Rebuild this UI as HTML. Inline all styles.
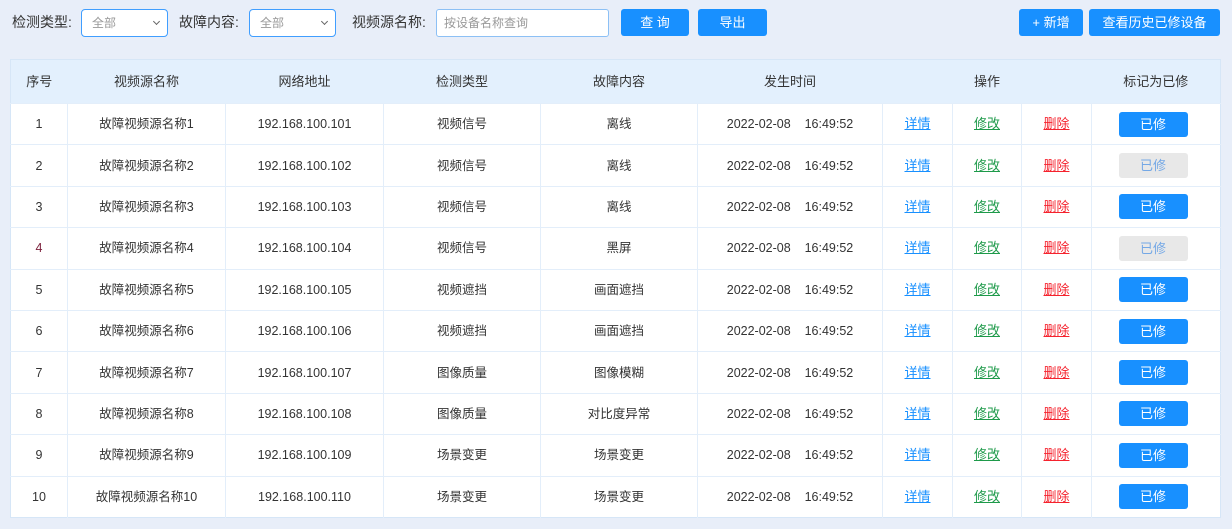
<!DOCTYPE html>
<html><head><meta charset="utf-8"><style>
*{box-sizing:border-box;margin:0;padding:0}
body{width:1232px;height:529px;background:#e8eef9;font-family:"Liberation Sans","Noto Sans CJK SC",sans-serif;color:#333;position:relative;overflow:hidden;line-height:16px}
.lbl{position:absolute;top:14px;font-size:14px;color:#333}
.sel{position:absolute;top:9px;height:28px;border:1px solid #409eff;border-radius:4px;background:#fff;font-size:12px;color:#999;padding:6px 10px;line-height:14px}
.sel:after{content:"";position:absolute;right:8px;top:9px;width:4px;height:4px;border-right:1px solid #666;border-bottom:1px solid #666;transform:rotate(45deg)}
.inp{position:absolute;top:9px;left:436px;width:173px;height:28px;border:1px solid #8cc0f5;border-radius:3px;background:#fff;font-size:12px;color:#999;padding:6px 7px;line-height:14px}
.btn{position:absolute;top:9px;height:27px;background:#1890ff;color:#fff;border-radius:3px;font-size:13px;text-align:center;line-height:27px}
table{position:absolute;left:10px;top:59px;width:1210px;border-collapse:collapse;table-layout:fixed;background:#fff;border:1px solid #d6e6f7}
th{height:44px;background:#e3f0fd;font-weight:normal;font-size:13px;color:#333;line-height:16px}
td{height:41.4px;text-align:center;font-size:12.5px;color:#333;border-left:1px solid #e3eefa;border-top:1px solid #e3eefa;line-height:16px}
td:first-child{border-left:none}
td:last-child{padding-right:6px}
a{font-size:13px;text-decoration:underline}
.x{color:#1890ff}.m{color:#1e9a4a}.d{color:#f5222d}
.y{display:inline-block;width:69px;height:25px;line-height:25px;border-radius:3px;background:#1890ff;color:#fff;font-size:13px;vertical-align:middle}
.g{background:#e8e8e8;color:#74a8e6}
</style></head><body>
<div class="lbl" style="left:12px">检测类型:</div>
<div class="sel" style="left:81px;width:87px">全部</div>
<div class="lbl" style="left:179px">故障内容:</div>
<div class="sel" style="left:249px;width:87px">全部</div>
<div class="lbl" style="left:352px">视频源名称:</div>
<div class="inp">按设备名称查询</div>
<div class="btn" style="left:621px;width:68px">查 询</div>
<div class="btn" style="left:698px;width:69px">导出</div>
<div class="btn" style="left:1019px;width:64px">+ 新增</div>
<div class="btn" style="left:1089px;width:131px">查看历史已修设备</div>
<table>
<colgroup><col style="width:57px"><col style="width:158px"><col style="width:158px"><col style="width:157px"><col style="width:157px"><col style="width:185px"><col style="width:70px"><col style="width:69px"><col style="width:70px"><col style="width:129px"></colgroup>
<tr><th>序号</th><th>视频源名称</th><th>网络地址</th><th>检测类型</th><th>故障内容</th><th>发生时间</th><th colspan="3">操作</th><th>标记为已修</th></tr>
<tr><td>1</td><td>故障视频源名称1</td><td>192.168.100.101</td><td>视频信号</td><td>离线</td><td>2022-02-08&nbsp;&nbsp;&nbsp;&nbsp;16:49:52</td><td><a class="x">详情</a></td><td><a class="m">修改</a></td><td><a class="d">删除</a></td><td><span class="y">已修</span></td></tr>
<tr><td>2</td><td>故障视频源名称2</td><td>192.168.100.102</td><td>视频信号</td><td>离线</td><td>2022-02-08&nbsp;&nbsp;&nbsp;&nbsp;16:49:52</td><td><a class="x">详情</a></td><td><a class="m">修改</a></td><td><a class="d">删除</a></td><td><span class="y g">已修</span></td></tr>
<tr><td>3</td><td>故障视频源名称3</td><td>192.168.100.103</td><td>视频信号</td><td>离线</td><td>2022-02-08&nbsp;&nbsp;&nbsp;&nbsp;16:49:52</td><td><a class="x">详情</a></td><td><a class="m">修改</a></td><td><a class="d">删除</a></td><td><span class="y">已修</span></td></tr>
<tr><td style="color:#7a1f3a">4</td><td>故障视频源名称4</td><td>192.168.100.104</td><td>视频信号</td><td>黑屏</td><td>2022-02-08&nbsp;&nbsp;&nbsp;&nbsp;16:49:52</td><td><a class="x">详情</a></td><td><a class="m">修改</a></td><td><a class="d">删除</a></td><td><span class="y g">已修</span></td></tr>
<tr><td>5</td><td>故障视频源名称5</td><td>192.168.100.105</td><td>视频遮挡</td><td>画面遮挡</td><td>2022-02-08&nbsp;&nbsp;&nbsp;&nbsp;16:49:52</td><td><a class="x">详情</a></td><td><a class="m">修改</a></td><td><a class="d">删除</a></td><td><span class="y">已修</span></td></tr>
<tr><td>6</td><td>故障视频源名称6</td><td>192.168.100.106</td><td>视频遮挡</td><td>画面遮挡</td><td>2022-02-08&nbsp;&nbsp;&nbsp;&nbsp;16:49:52</td><td><a class="x">详情</a></td><td><a class="m">修改</a></td><td><a class="d">删除</a></td><td><span class="y">已修</span></td></tr>
<tr><td>7</td><td>故障视频源名称7</td><td>192.168.100.107</td><td>图像质量</td><td>图像模糊</td><td>2022-02-08&nbsp;&nbsp;&nbsp;&nbsp;16:49:52</td><td><a class="x">详情</a></td><td><a class="m">修改</a></td><td><a class="d">删除</a></td><td><span class="y">已修</span></td></tr>
<tr><td>8</td><td>故障视频源名称8</td><td>192.168.100.108</td><td>图像质量</td><td>对比度异常</td><td>2022-02-08&nbsp;&nbsp;&nbsp;&nbsp;16:49:52</td><td><a class="x">详情</a></td><td><a class="m">修改</a></td><td><a class="d">删除</a></td><td><span class="y">已修</span></td></tr>
<tr><td>9</td><td>故障视频源名称9</td><td>192.168.100.109</td><td>场景变更</td><td>场景变更</td><td>2022-02-08&nbsp;&nbsp;&nbsp;&nbsp;16:49:52</td><td><a class="x">详情</a></td><td><a class="m">修改</a></td><td><a class="d">删除</a></td><td><span class="y">已修</span></td></tr>
<tr><td>10</td><td>故障视频源名称10</td><td>192.168.100.110</td><td>场景变更</td><td>场景变更</td><td>2022-02-08&nbsp;&nbsp;&nbsp;&nbsp;16:49:52</td><td><a class="x">详情</a></td><td><a class="m">修改</a></td><td><a class="d">删除</a></td><td><span class="y">已修</span></td></tr>
</table>
</body></html>
